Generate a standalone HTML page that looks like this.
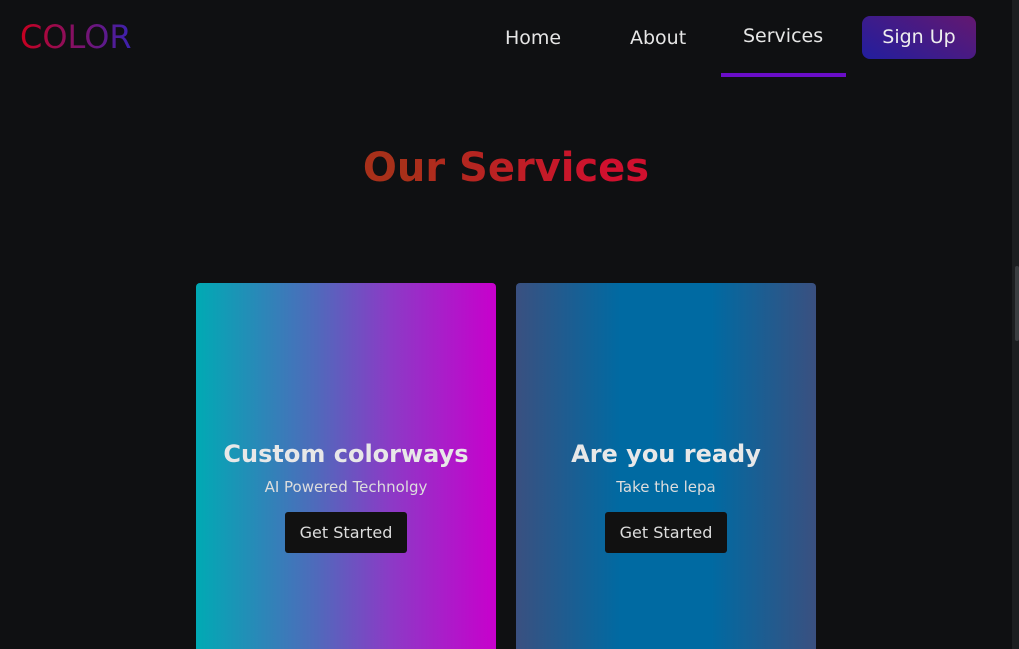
<!DOCTYPE html><html><head><style>
*{margin:0;padding:0;box-sizing:border-box}
html{width:1019px;height:649px;overflow:hidden;background:#0f1012}
body{width:1019px;height:649px;overflow:hidden;background:#0f1012;font-family:"DejaVu Sans",sans-serif;position:relative}
.logo{position:absolute;left:20px;top:18px;font-size:32px;background:linear-gradient(90deg,#c8001e,#3a22b0);-webkit-background-clip:text;color:transparent}
.nav a{position:absolute;top:27px;font-size:19px;color:#e6e6e6}
.ul{position:absolute;left:721px;top:73px;width:125px;height:4px;background:#6a0dc8}
.btn{position:absolute;left:862px;top:16px;width:114px;height:43px;border-radius:8px;background:linear-gradient(30deg,#221e9e,#631870);color:#eee;font-size:19px;text-align:center;line-height:43px}
h1{position:absolute;left:0;width:1012px;top:145px;text-align:center;font-size:40px;font-weight:bold;background:linear-gradient(90deg,#a8301a 40%,#d0102e 60%);-webkit-background-clip:text;color:transparent}
.card{position:absolute;top:283px;width:300px;height:366px;border-radius:4px 4px 0 0;text-align:center;color:#e8e8e8}
.card h2{margin-top:157px;font-size:24px;font-weight:bold}
.card p{font-size:15px;margin-top:10px;color:#ddd}
.card span{display:inline-block;margin-top:16px;background:#111;color:#ddd;font-size:16px;padding:0 15px;height:41px;line-height:41px;border-radius:3px}
.sb{position:absolute;left:1012px;top:0;width:7px;height:649px;background:#1c1e20}
.th{position:absolute;left:1015px;top:266px;width:4px;height:75px;background:#3a3d40;border-radius:2px}
</style></head><body>
<div class="logo">COLOR</div>
<div class="nav"><a style="left:505px">Home</a><a style="left:630px">About</a><a style="left:743px;top:25px">Services</a></div>
<div class="ul"></div>
<div class="btn">Sign Up</div>
<h1>Our Services</h1>
<div class="card" style="left:196px;background:linear-gradient(90deg,#00aab4,#4f6abb 40%,#8c3ac6 65%,#c800cc)"><h2>Custom colorways</h2><p>AI Powered Technolgy</p><span>Get Started</span></div>
<div class="card" style="left:516px;background:linear-gradient(90deg,#3a5080,#006aa2 35%,#006aa2 65%,#3a5080)"><h2>Are you ready</h2><p>Take the lepa</p><span>Get Started</span></div>
<div class="sb"></div><div class="th"></div>
</body></html>
